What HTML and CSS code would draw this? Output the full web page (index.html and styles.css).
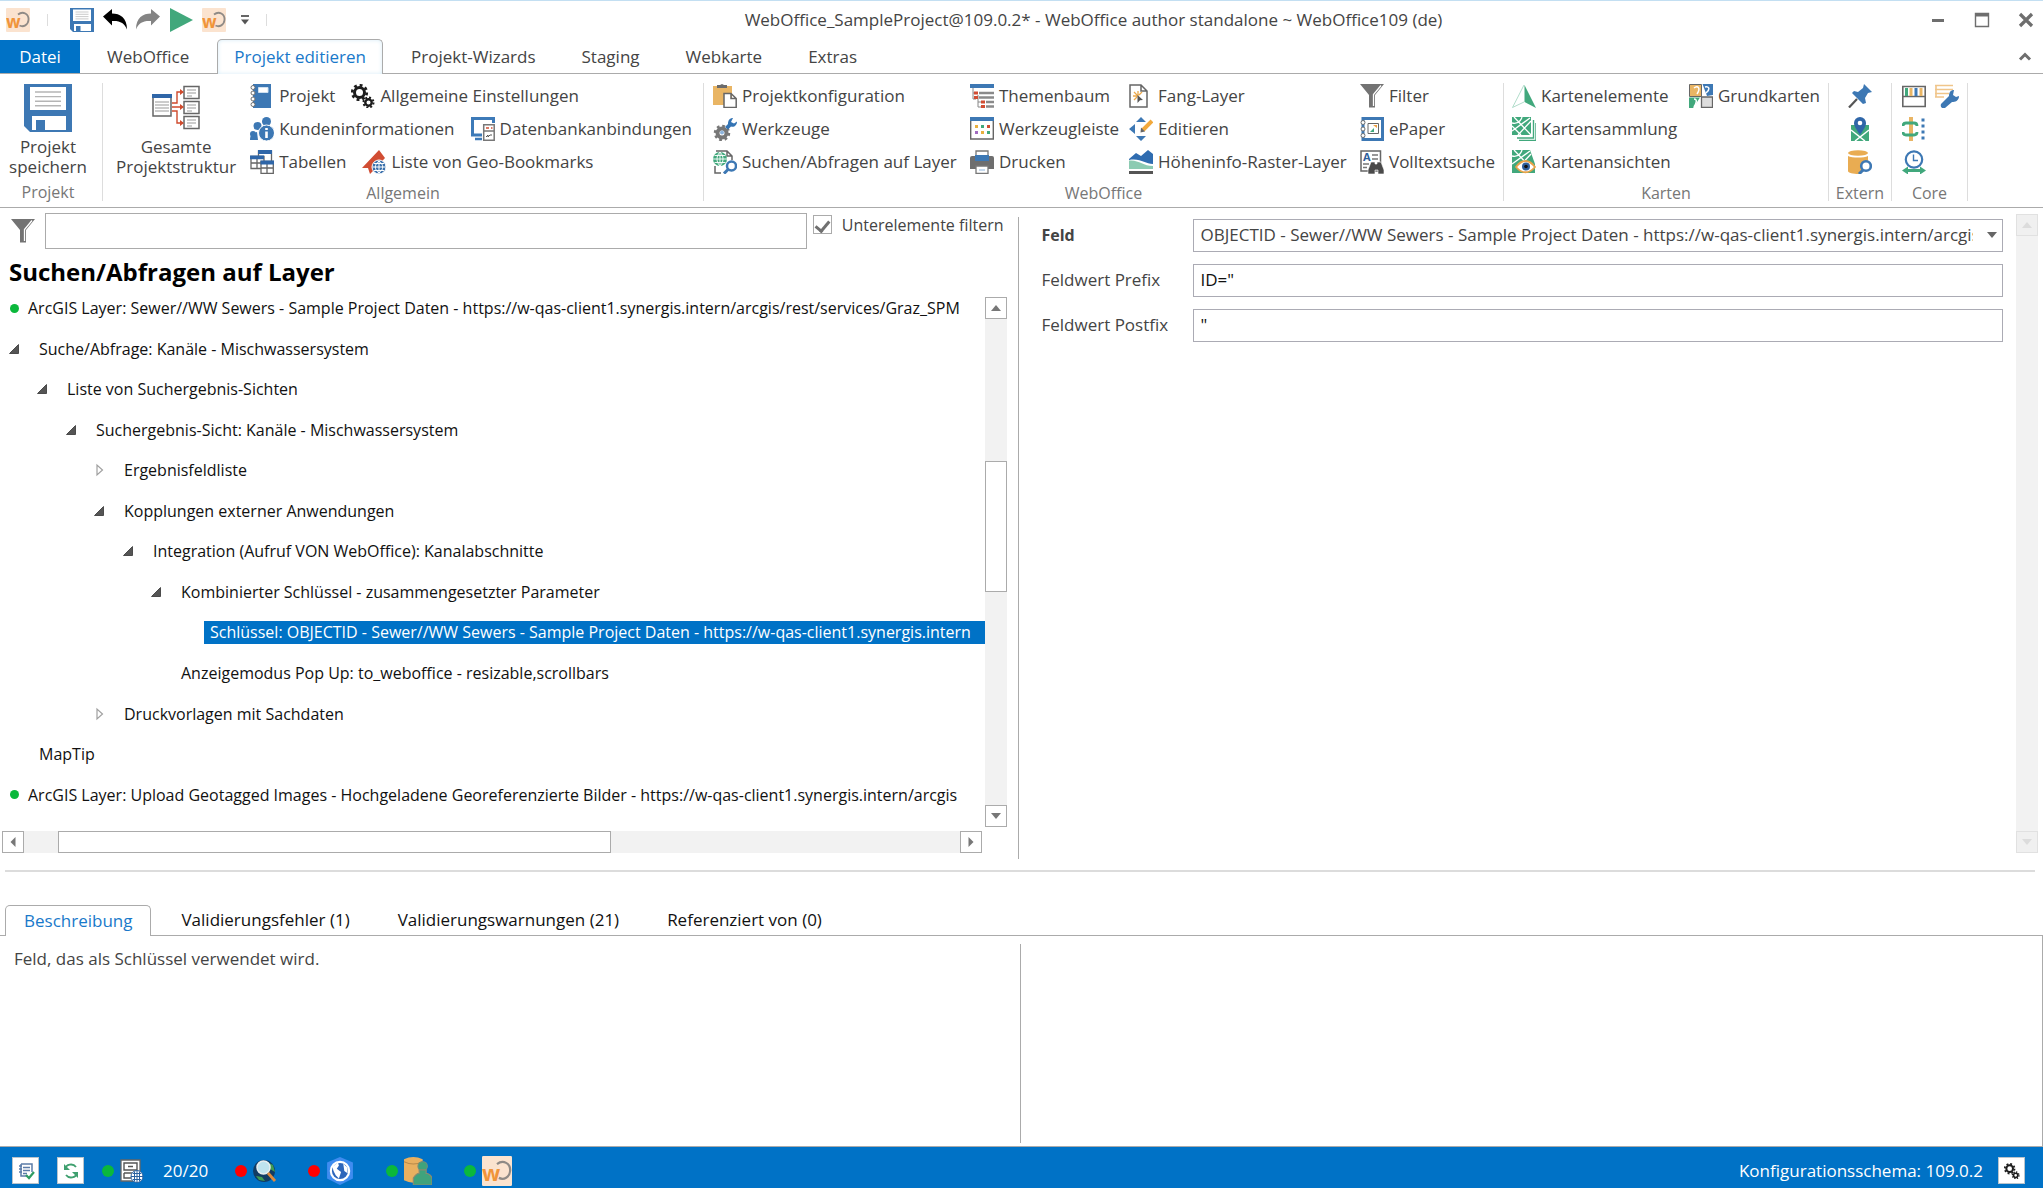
FILE: index.html
```html
<!DOCTYPE html>
<html lang="de">
<head>
<meta charset="utf-8">
<title>WebOffice_SampleProject@109.0.2* - WebOffice author standalone</title>
<meta name="viewport" content="width=device-width, initial-scale=1">
<link rel="stylesheet" href="styles.css">
</head>
<body>
<svg class="sprite" aria-hidden="true">
  <symbol id="wo" viewBox="0 0 24 24"><rect width="24" height="24" rx="1" fill="#fbe3cf"/><text x="0" y="20" font-family="Open Sans, sans-serif" font-weight="700" font-size="17" fill="#f0943a">w</text><path d="M12 6.500C17 2.500 23 6 22.500 12c-.5 5-5 7.500-9 5.500" fill="none" stroke="#8f8a86" stroke-width="1.800"/></symbol>
  <symbol id="floppy" viewBox="0 0 24 24"><path fill="#3d78b4" d="M0 0h24v24H3l-3-3z"/><path fill="#fff" d="M3 1.500h18v11.500H3zM4 16h17v7H4z"/><path fill="#3d78b4" d="M6 18h4.500v5H6z"/><path d="M5.500 4h13M5.500 6.300h13M5.500 8.600h13M5.500 10.900h13" stroke="#b5b5b5" stroke-width=".7"/></symbol>
  <symbol id="undo" viewBox="0 0 24 24"><path fill="#000" d="M0 8.500L9 1v4.500c8 0 15 4 15 16-2.500-6.500-7-9-15-8.500v4.500z"/></symbol>
  <symbol id="redo" viewBox="0 0 24 24"><path fill="#848484" d="M24 8.500L15 1v4.500C7 5.500 0 9.500 0 21.500 2.500 15 7 12.500 15 13v4.500z"/></symbol>
  <symbol id="play" viewBox="0 0 24 24"><path fill="#41a87c" d="M1 0l23 12L1 24z"/></symbol>
  <symbol id="book" viewBox="0 0 24 24"><path fill="#3d78b4" d="M3 0h18v24H3z"/><path fill="#fff" stroke="#cfe0f0" d="M8.500 3.500h9.500v5H8.500z"/><g fill="#fff" stroke="#707070"><circle cx="3" cy="3.500" r="2"/><circle cx="3" cy="9" r="2"/><circle cx="3" cy="15" r="2"/><circle cx="3" cy="20.500" r="2"/></g></symbol>
  <symbol id="gears" viewBox="0 0 24 24"><g fill="none" stroke="#1d1d1d"><circle cx="8.500" cy="8.500" r="5" stroke-width="3"/><circle cx="8.500" cy="8.500" r="7.300" stroke-width="2.600" stroke-dasharray="2.860 2.860"/><circle cx="17.500" cy="18.500" r="3.200" stroke-width="2.400"/><circle cx="17.500" cy="18.500" r="5" stroke-width="2" stroke-dasharray="1.960 1.960"/></g></symbol>
  <symbol id="people" viewBox="0 0 24 24"><g fill="#3d78b4"><circle cx="16.500" cy="4.500" r="4.500"/><circle cx="7.500" cy="9" r="4"/><circle cx="3" cy="17" r="3"/><path d="M0 23c0-5 2-7 7-8l1 8z"/></g><circle cx="16.500" cy="16" r="8" fill="#3d78b4" stroke="#fff"/><path d="M16.500 11v2M16.500 14.500V21" stroke="#fff" stroke-width="2.600"/></symbol>
  <symbol id="tables" viewBox="0 0 24 24"><g fill="#fff" stroke="#666" stroke-width="1.300"><path d="M8.500 1h13v12h-13z"/><path d="M1 6.500h13v12H1zM1 13h13M7 9v9"/><path d="M11 11.500h12.300v12H11zM11 18h12M17 14v9"/></g><path fill="#2f66a8" d="M8 0h14v4H8zM0 5.500h14v3.800H0zM10.500 10.500H24v4H10.500z"/></symbol>
  <symbol id="bookmark" viewBox="0 0 24 24"><path fill="#d14d33" d="M0 18L17 0l6 8-13 14-2 2-2-6z"/><circle cx="17" cy="17" r="7" fill="#3a70ac" stroke="#fff"/><path d="M10.500 17h13M17 10.500v13M17 11c-5 4-5 8 0 12 5-4 5-8 0-12M12 13.500h10M12 20.500h10" fill="none" stroke="#fff"/></symbol>
  <symbol id="db" viewBox="0 0 24 24"><path d="M11 18H1.500V1.500h21V6" fill="none" stroke="#3d7ab8" stroke-width="3"/><path d="M4 22h7" stroke="#3d7ab8" stroke-width="2.500"/><path fill="#fff" stroke="#777" stroke-width="1.500" d="M12.700 7.700h10.500v15.500H12.700zM13 14h10"/><path stroke="#d14d33" stroke-width="1.400" d="M15 11h3M20 11h1.500"/><path stroke="#555" fill="none" d="M15 20l2-2v2l2-2 2 0"/></symbol>
  <symbol id="clip" viewBox="0 0 24 24"><path fill="#e9b564" d="M0 2h19v19H0z"/><path fill="#6b6b6b" d="M4 1h3l2-1 2 1h3v3H4z"/><path fill="#fff" stroke="#666" stroke-width="1.500" d="M11 9.500h7l5.200 5v9H11zM18 9.500v5h5"/></symbol>
  <symbol id="tool" viewBox="0 0 24 24"><circle cx="9" cy="16" r="4.500" fill="none" stroke="#777" stroke-width="4"/><circle cx="9" cy="16" r="7" fill="none" stroke="#777" stroke-width="2.500" stroke-dasharray="2.750 2.750"/><circle cx="9" cy="15.500" r="2" fill="#8db4dc"/><path fill="#3474b4" d="M12 10l3-3c0-4 2-6 5-6l-2 4 3 1.500 3-2c0 4-3 6-6 5l-3 3z"/></symbol>
  <symbol id="searchlayer" viewBox="0 0 24 24"><path d="M3 1h11l5 5v4M2 16v7h6M14 1v5h5" fill="none" stroke="#666" stroke-width="1.500"/><circle cx="7" cy="9" r="7" fill="#41a87c"/><path d="M0 9h14M7 2v14M1.500 5.500h11M1.500 12.500h11M7 2c-4 4-4 10 0 14 4-4 4-10 0-14" fill="none" stroke="#fff" stroke-width=".9"/><circle cx="18.500" cy="16" r="4.500" fill="#fff" stroke="#3d78b4" stroke-width="2.500"/><path d="M15 19.500l-4 4" stroke="#3d78b4" stroke-width="3"/></symbol>
  <symbol id="theme" viewBox="0 0 24 24"><path fill="#3d78b4" d="M0 0h24v4H0z"/><path d="M3 4v11h3M3 9h3M8 11v12h4M8 18h4" fill="none" stroke="#888"/><path d="M9 9h15M9 13.500h15M16 18h8M16 22.500h8" stroke="#8a8a8a" stroke-width="2.500"/><path d="M4 9h4M4 13.500h4M11 18h4M11 22.500h4" stroke="#d14d33" stroke-width="2.800"/></symbol>
  <symbol id="toolbar" viewBox="0 0 24 24"><path fill="#fff" stroke="#666" stroke-width="1.400" d="M.7 1h22.600v21H.7z"/><path fill="#3d78b4" d="M0 0h24v4H0z"/><path stroke="#e9b040" stroke-width="3" d="M5 9.500h3M11 15.500h3"/><path stroke="#41a87c" stroke-width="3" d="M11 9.500h3M17 15.500h3"/><path stroke="#d14d33" stroke-width="3" d="M17 9.500h3"/><path stroke="#a06ac0" stroke-width="3" d="M5 15.500h3"/></symbol>
  <symbol id="print" viewBox="0 0 24 24"><path fill="#6e6e6e" d="M0 8q0-2 2-2h20q2 0 2 2v11H0z"/><path fill="#fff" stroke="#777" stroke-width="1.300" d="M6 1h12v9H6zM6 16h12v7.300H6z"/><path fill="#3d78b4" d="M5 5h14v6H5z"/><path d="M9 20h6" stroke="#8db4dc"/></symbol>
  <symbol id="snap" viewBox="0 0 24 24"><path fill="#fff" stroke="#666" stroke-width="1.500" d="M1 1h11l6 6v16H1zM12 1v6h6"/><path stroke="#eba94c" stroke-width="1.300" d="M9 7v5M4 12h5M5 8l3 3M13 8l-3 3M5 16l3-3"/><path fill="#555" d="M8.500 11l5.500 5-3 .3L8.500 19z"/></symbol>
  <symbol id="edit" viewBox="0 0 24 24"><path fill="#3d78b4" d="M12 0l5 5H7zM12 24l5-5H7zM0 12l6-5v10z"/><path d="M14 13L23 4" stroke="#f2a93c" stroke-width="4"/><path fill="#666" d="M12 10.500l4 4-4.500 1z"/></symbol>
  <symbol id="height" viewBox="0 0 24 24"><path fill="#2f6cb0" d="M0 9l7-6 5 3 7-6 5 4v10c-8 0-12-6-24-4z"/><path fill="#8ccbb2" d="M0 10.500C10 9.500 14 16 24 16v3H0z"/><path fill="#555" d="M0 21h24v3H0z"/></symbol>
  <symbol id="funnel" viewBox="0 0 24 24"><path fill="#737373" d="M0 0h24L15 11v12.500H9V11z"/><path fill="none" stroke="#fff" stroke-width="1.300" d="M21 1.500l-7.500 9V22"/></symbol>
  <symbol id="epaper" viewBox="0 0 24 24"><path fill="#fff" stroke="#3d78b4" stroke-width="3" d="M3 1.500h19.500v21H3z"/><path fill="#fff" stroke="#666" d="M8 6.500h10.500v10H8z"/><path fill="#f0a040" d="M13 8h4v3z"/><path fill="#41a87c" d="M10 15l4-4v4z"/><g fill="#fff" stroke="#707070"><circle cx="3" cy="5.500" r="2"/><circle cx="3" cy="12" r="2"/><circle cx="3" cy="18.500" r="2"/></g></symbol>
  <symbol id="fulltext" viewBox="0 0 24 24"><path fill="#fff" stroke="#666" stroke-width="1.500" d="M1 1h19.500v20H1z"/><text x="3" y="11" font-family="Open Sans, sans-serif" font-weight="700" font-size="11" fill="#2f5f9c">A</text><path d="M12 5h6M12 9h6M3 14h6M3 17.500h4" stroke="#777" stroke-width="1.300"/><path fill="#4a4a4a" stroke="#fff" stroke-width=".6" d="M11 12h4v2h2v-2h4l3 8v4h-6v-4h-3v4H8v-4z"/></symbol>
  <symbol id="north" viewBox="0 0 24 24"><path d="M12 1L.5 23.500 12 18" fill="none" stroke="#a8d8c4" stroke-width=".9"/><path fill="#41a87c" d="M12.500 1L24 24l-11.500-6z"/></symbol>
  <symbol id="mapset" viewBox="0 0 24 24"><path d="M7 23.500h17V6M5 21h16.500V3" fill="none" stroke="#41a87c" stroke-width="1.400"/><path fill="#41a87c" d="M0 0h19v18H0z"/><path d="M0 6C8 8 10 0 10 0M0 14L18 1M2 0l17 18M6 18l13-14M0 9l9 9" stroke="#fff" stroke-width="1.300" fill="none"/></symbol>
  <symbol id="mapview" viewBox="0 0 24 24"><path fill="#41a87c" d="M0 0h18l5 14v9H0z"/><path d="M0 6C8 8 10 0 10 0M0 14L18 1M2 0l17 18M6 18l13-14" stroke="#fff" stroke-width="1.300" fill="none"/><path fill="#fff" stroke="#e8a34a" stroke-width="1.800" d="M4 17c6-8 13-8 19 0-6 7-13 7-19 0z"/><circle cx="14" cy="16.500" r="4" fill="#2f5f9c"/><circle cx="14" cy="16.500" r="1.800" fill="#111"/></symbol>
  <symbol id="basemap" viewBox="0 0 24 24"><path fill="#e9b564" stroke="#666" d="M.5.500h12v12H.5z"/><path fill="#3d78b4" d="M13.500 0H24v11L18 12z"/><path fill="#41a87c" d="M0 13.500h11L4 24H0z"/><path fill="#ddd" stroke="#666" stroke-width="1.300" d="M12.500 13h11v10.500h-11z"/><path d="M5 4c4-3 7 0 3 6M16 3c5-1 5 3 1 6M5 15c4 0 2 5 0 8" fill="none" stroke="#fff" stroke-width="1.500"/></symbol>
  <symbol id="pin" viewBox="0 0 24 24"><path d="M9 15L1 23.500" stroke="#555" stroke-width="2.200"/><path fill="#3d78b4" d="M16 0l8 8-4 1-3 5 1 5-3 1L4 9l2-2 4 1 5-4z"/></symbol>
  <symbol id="mappin" viewBox="0 0 24 24"><path fill="#41a87c" d="M3 8h4l5 9 5-9h4v16H3z"/><path d="M3 13l14 11M21 13L7 24" stroke="#fff" stroke-width="1.500" fill="none"/><path fill="#2f66a8" d="M12 18C8 12 6 9 6 6a6 6 0 0112 0c0 3-2 6-6 12z"/><circle cx="12" cy="6" r="2.300" fill="#fff"/></symbol>
  <symbol id="dbsearch" viewBox="0 0 24 24"><path fill="#e9ac52" d="M0 6c4 2 16 2 20 0v13l-9 5C5 24 0 23 0 21z"/><ellipse cx="10" cy="3" rx="10" ry="2.800" fill="#e9ac52"/><circle cx="18" cy="16" r="4.800" fill="#fff" stroke="#3d78b4" stroke-width="2.600"/><path d="M15 20l-4 4" stroke="#3d78b4" stroke-width="3"/></symbol>
  <symbol id="palette" viewBox="0 0 24 24"><path fill="#fff" stroke="#666" stroke-width="1.600" d="M.8 2.500h22.400v20H.8z"/><path d="M1 12.500h22" stroke="#666" stroke-width="1.500"/><path d="M4.500 4v8" stroke="#41a87c" stroke-width="3"/><path d="M9 4v8M19 4v8" stroke="#e9b564" stroke-width="3"/><path d="M14 4v8" stroke="#3d78b4" stroke-width="3"/></symbol>
  <symbol id="cfg" viewBox="0 0 24 24"><path d="M0 1.500h18M0 5.500h18M0 9.500h14M0 13h9M1 1v12" stroke="#f0c58a" stroke-width="1.600"/><path fill="#3d78b4" d="M6 20l8-8c0-4 2-6 5-6l-1 5 3 2 3-1c0 5-4 6-7 6l-7 6c-3 1-5-1-4-4z"/></symbol>
  <symbol id="align" viewBox="0 0 24 24"><path fill="#e9b564" d="M7 0h4v24H7z"/><path d="M1 9q0-3 3-3h8q3 0 3 3M1 15q0 3 3 3h8q3 0 3-3" fill="none" stroke="#41a87c" stroke-width="2.800"/><path d="M21 1.500v22" stroke="#3d78b4" stroke-width="3" stroke-dasharray="3 3"/></symbol>
  <symbol id="clock" viewBox="0 0 24 24"><circle cx="12" cy="9.500" r="8.200" fill="#fff" stroke="#3d78b4" stroke-width="2.200"/><path d="M11.500 4.500v6H16" fill="none" stroke="#3d78b4" stroke-width="1.400"/><path fill="#41a87c" d="M0 20.500l6-4v2.500h12v-2.500l6 4-6 4v-2.500H6v2.500z"/></symbol>
  <symbol id="structure" viewBox="0 0 48 48"><g fill="#fff" stroke="#666" stroke-width="1.500"><path d="M1 12h18v20H1zM32 2.500h15v12H32zM32 17.500h15v12H32zM32 32.500h15v12H32z"/></g><path fill="#2f66a8" d="M0 10h20v4H0z"/><path d="M3 18h14M3 21h14M3 24h14M3 27h14M35 6h9M35 9h9M35 12h5M35 21h9M35 24h9M35 27h5M35 36h9M35 39h9M35 42h5" stroke="#999"/><path d="M20 19h5V8h4M20 23h9M20 27h5v12h4" fill="none" stroke="#cf4a2d" stroke-width="1.400"/><path fill="#cf4a2d" d="M28 5l4 3-4 3zM28 20l4 3-4 3zM28 36l4 3-4 3z"/></symbol>
  <symbol id="min" viewBox="0 0 16 16"><path fill="#6e6e6e" d="M2 7h12v3H2z"/></symbol>
  <symbol id="max" viewBox="0 0 16 16"><path d="M1.500 1.500h13v13h-13z" fill="none" stroke="#6e6e6e" stroke-width="1.400"/><path fill="#6e6e6e" d="M1 1h14v3.500H1z"/></symbol>
  <symbol id="close" viewBox="0 0 16 16"><path d="M2 2l12 12M14 2L2 14" stroke="#6e6e6e" stroke-width="3.200"/></symbol>
  <symbol id="fold" viewBox="0 0 16 16"><path d="M3 11.500L8 6.500l5 5" fill="none" stroke="#6e6e6e" stroke-width="3"/></symbol>
  <symbol id="up" viewBox="0 0 10 10"><path fill="currentColor" d="M0 8l5-6 5 6z"/></symbol>
  <symbol id="down" viewBox="0 0 10 10"><path fill="currentColor" d="M0 2l5 6 5-6z"/></symbol>
  <symbol id="left" viewBox="0 0 10 10"><path fill="currentColor" d="M7.500 0v10L2.500 5z"/></symbol>
  <symbol id="right" viewBox="0 0 10 10"><path fill="currentColor" d="M2.500 0v10l5-5z"/></symbol>
  <symbol id="open" viewBox="0 0 10 10"><path fill="#555" stroke="#222" stroke-width=".7" d="M9.500.500v9H.5z"/></symbol>
  <symbol id="shut" viewBox="0 0 10 14"><path fill="#fff" stroke="#a0a0a0" stroke-width="1.200" d="M3 2v10l5.500-5z"/></symbol>
  <symbol id="check" viewBox="0 0 24 24"><path fill="none" stroke="#5b7ca8" stroke-width="1.500" d="M7 5h11v8M7 5v12h6M9 8.500h7M9 11.500h7M9 14.500h4M5 7h3M5 10h3M5 13h3"/><path d="M12 16l3 3 5-6" fill="none" stroke="#2f9c62" stroke-width="2.200"/></symbol>
  <symbol id="sync" viewBox="0 0 24 24"><path d="M6 10c1-5 8-6 11-2M18 14c-1 5-8 6-11 2" fill="none" stroke="#3fa06f" stroke-width="1.800"/><path fill="#3fa06f" d="M5 5v6h6zM19 19v-6h-6z"/></symbol>
  <symbol id="server" viewBox="0 0 24 24"><path fill="#fff" stroke="#666" stroke-width="1.300" d="M1 1h19v21H1z"/><path fill="none" stroke="#555" stroke-width="1.400" d="M4 4h13v7H4zM4 14v5h7M4 14h9M8 7.500h5"/><circle cx="17" cy="17.500" r="6" fill="#fff" stroke="#2b62a0"/><path d="M11 17.500h12M17 12v11M13 14.500h8M13 20.500h8M14.500 12.500v10M19.500 12.500v10" stroke="#2b62a0"/></symbol>
  <symbol id="globe" viewBox="0 0 24 24"><circle cx="11" cy="12" r="11" fill="#123c63"/><path fill="#3f9b52" d="M14 3l6 3 2 7-5-3zM3 17l6 1 3 4-6-1z"/><circle cx="10.500" cy="8.500" r="6.500" fill="#bfe3ee" stroke="#e8eef0" stroke-width="1.500"/><path d="M15 14l7 8" stroke="#e08a3c" stroke-width="2.800"/></symbol>
  <symbol id="hex" viewBox="0 0 24 26"><path fill="#3f8cf0" d="M12 0l12 5v15l-12 6-12-6V5z"/><circle cx="12" cy="13" r="8.500" fill="#2d66bb" stroke="#fff" stroke-width="2"/><path fill="#fff" d="M5 9l5-4 1 3-2 3 4 3-2 6-3-3-2-4zM15 6l4 4v5l-3-2z"/></symbol>
  <symbol id="dbuser" viewBox="0 0 24 24"><path fill="#e9b060" d="M0 2q8-4 16 0v18q-8 4-16 0z"/><path d="M0 4q8 4 16 0" fill="none" stroke="#b98a4a"/><circle cx="16" cy="8" r="4" fill="#3fa37c" stroke="#6c8f7e"/><path fill="#3fa37c" stroke="#8a8a70" d="M8 24v-6c2-3 4-4 5-4v-3h6v3c2 0 5 2 5 5v5z"/></symbol>
</svg>

<header class="titlebar">
  <div class="quick">
    <svg class="i24"><use href="#wo"/></svg>
    <span class="tick"></span>
    <button type="button" aria-label="Speichern"><svg class="i24"><use href="#floppy"/></svg></button>
    <button type="button" aria-label="Rückgängig"><svg class="i24"><use href="#undo"/></svg></button>
    <button type="button" aria-label="Wiederholen"><svg class="i24"><use href="#redo"/></svg></button>
    <button type="button" aria-label="Starten"><svg class="i24"><use href="#play"/></svg></button>
    <button type="button" aria-label="WebOffice"><svg class="i24"><use href="#wo"/></svg></button>
    <button type="button" class="more" aria-label="Anpassen"><svg class="i8"><use href="#down"/></svg></button>
    <span class="tick"></span>
  </div>
  <h1 class="title">WebOffice_SampleProject@109.0.2* - WebOffice author standalone ~ WebOffice109 (de)</h1>
  <div class="winbtns">
    <button type="button" aria-label="Minimieren"><svg class="i16"><use href="#min"/></svg></button>
    <button type="button" aria-label="Maximieren"><svg class="i16"><use href="#max"/></svg></button>
    <button type="button" aria-label="Schließen"><svg class="i16"><use href="#close"/></svg></button>
  </div>
</header>

<nav class="tabs">
  <button type="button" class="tab tab-file">Datei</button>
  <button type="button" class="tab">WebOffice</button>
  <button type="button" class="tab tab-active">Projekt editieren</button>
  <button type="button" class="tab">Projekt-Wizards</button>
  <button type="button" class="tab">Staging</button>
  <button type="button" class="tab">Webkarte</button>
  <button type="button" class="tab">Extras</button>
  <button type="button" class="fold" aria-label="Menüband minimieren"><svg class="i16"><use href="#fold"/></svg></button>
</nav>

<section class="ribbon">
  <div class="group g-projekt">
    <div class="cmds"><button type="button" class="big"><svg class="i48"><use href="#floppy"/></svg><span>Projekt<br>speichern</span></button></div>
    <h2>Projekt</h2>
  </div>
  <div class="group g-allgemein">
    <div class="cmds">
      <button type="button" class="big"><svg class="i48"><use href="#structure"/></svg><span>Gesamte<br>Projektstruktur</span></button>
      <div class="lines">
        <div class="line"><button type="button" class="cmd"><svg class="i24"><use href="#book"/></svg>Projekt</button><button type="button" class="cmd"><svg class="i24"><use href="#gears"/></svg>Allgemeine Einstellungen</button></div>
        <div class="line"><button type="button" class="cmd"><svg class="i24"><use href="#people"/></svg>Kundeninformationen</button><button type="button" class="cmd"><svg class="i24"><use href="#db"/></svg>Datenbankanbindungen</button></div>
        <div class="line"><button type="button" class="cmd"><svg class="i24"><use href="#tables"/></svg>Tabellen</button><button type="button" class="cmd"><svg class="i24"><use href="#bookmark"/></svg>Liste von Geo-Bookmarks</button></div>
      </div>
    </div>
    <h2>Allgemein</h2>
  </div>
  <div class="group g-weboffice">
    <div class="cmds matrix">
      <button type="button" class="cmd"><svg class="i24"><use href="#clip"/></svg>Projektkonfiguration</button>
      <button type="button" class="cmd"><svg class="i24"><use href="#theme"/></svg>Themenbaum</button>
      <button type="button" class="cmd"><svg class="i24"><use href="#snap"/></svg>Fang-Layer</button>
      <button type="button" class="cmd"><svg class="i24"><use href="#funnel"/></svg>Filter</button>
      <button type="button" class="cmd"><svg class="i24"><use href="#tool"/></svg>Werkzeuge</button>
      <button type="button" class="cmd"><svg class="i24"><use href="#toolbar"/></svg>Werkzeugleiste</button>
      <button type="button" class="cmd"><svg class="i24"><use href="#edit"/></svg>Editieren</button>
      <button type="button" class="cmd"><svg class="i24"><use href="#epaper"/></svg>ePaper</button>
      <button type="button" class="cmd"><svg class="i24"><use href="#searchlayer"/></svg>Suchen/Abfragen auf Layer</button>
      <button type="button" class="cmd"><svg class="i24"><use href="#print"/></svg>Drucken</button>
      <button type="button" class="cmd"><svg class="i24"><use href="#height"/></svg>Höheninfo-Raster-Layer</button>
      <button type="button" class="cmd"><svg class="i24"><use href="#fulltext"/></svg>Volltextsuche</button>
    </div>
    <h2>WebOffice</h2>
  </div>
  <div class="group g-karten">
    <div class="cmds matrix">
      <button type="button" class="cmd"><svg class="i24"><use href="#north"/></svg>Kartenelemente</button>
      <button type="button" class="cmd"><svg class="i24"><use href="#basemap"/></svg>Grundkarten</button>
      <button type="button" class="cmd first"><svg class="i24"><use href="#mapset"/></svg>Kartensammlung</button>
      <button type="button" class="cmd first"><svg class="i24"><use href="#mapview"/></svg>Kartenansichten</button>
    </div>
    <h2>Karten</h2>
  </div>
  <div class="group g-extern">
    <div class="cmds matrix">
      <button type="button" class="cmd" aria-label="Externe Anwendung"><svg class="i24"><use href="#pin"/></svg></button>
      <button type="button" class="cmd" aria-label="Externe Karte"><svg class="i24"><use href="#mappin"/></svg></button>
      <button type="button" class="cmd" aria-label="Externe Suche"><svg class="i24"><use href="#dbsearch"/></svg></button>
    </div>
    <h2>Extern</h2>
  </div>
  <div class="group g-core">
    <div class="cmds matrix">
      <button type="button" class="cmd" aria-label="Legende"><svg class="i24"><use href="#palette"/></svg></button>
      <button type="button" class="cmd" aria-label="Einstellungen"><svg class="i24"><use href="#cfg"/></svg></button>
      <button type="button" class="cmd first" aria-label="Ausrichtung"><svg class="i24"><use href="#align"/></svg></button>
      <button type="button" class="cmd first" aria-label="Zeit"><svg class="i24"><use href="#clock"/></svg></button>
    </div>
    <h2>Core</h2>
  </div>
</section>

<main class="work">
  <section class="treepane">
    <div class="filter">
      <svg class="i24"><use href="#funnel"/></svg>
      <input type="text" class="filter-box" aria-label="Filter">
      <input type="checkbox" id="sub" class="tickbox" checked>
      <label for="sub">Unterelemente filtern</label>
    </div>
    <h2 class="heading">Suchen/Abfragen auf Layer</h2>
    <div class="treearea">
      <ul class="tree">
        <li class="root"><i class="dot green"></i><span>ArcGIS Layer: Sewer//WW Sewers - Sample Project Daten - https://w-qas-client1.synergis.intern/arcgis/rest/services/Graz_SPM</span></li>
        <li class="l0"><svg class="i10"><use href="#open"/></svg><span>Suche/Abfrage: Kanäle - Mischwassersystem</span></li>
        <li class="l1"><svg class="i10"><use href="#open"/></svg><span>Liste von Suchergebnis-Sichten</span></li>
        <li class="l2"><svg class="i10"><use href="#open"/></svg><span>Suchergebnis-Sicht: Kanäle - Mischwassersystem</span></li>
        <li class="l3"><svg class="i10 tall"><use href="#shut"/></svg><span>Ergebnisfeldliste</span></li>
        <li class="l3"><svg class="i10"><use href="#open"/></svg><span>Kopplungen externer Anwendungen</span></li>
        <li class="l4"><svg class="i10"><use href="#open"/></svg><span>Integration (Aufruf VON WebOffice): Kanalabschnitte</span></li>
        <li class="l5"><svg class="i10"><use href="#open"/></svg><span>Kombinierter Schlüssel - zusammengesetzter Parameter</span></li>
        <li class="l6"><span class="selected">Schlüssel: OBJECTID - Sewer//WW Sewers - Sample Project Daten - https://w-qas-client1.synergis.intern</span></li>
        <li class="l5"><svg class="i10"></svg><span>Anzeigemodus Pop Up: to_weboffice - resizable,scrollbars</span></li>
        <li class="l3"><svg class="i10 tall"><use href="#shut"/></svg><span>Druckvorlagen mit Sachdaten</span></li>
        <li class="l0"><svg class="i10"></svg><span>MapTip</span></li>
        <li class="root"><i class="dot green"></i><span>ArcGIS Layer: Upload Geotagged Images - Hochgeladene Georeferenzierte Bilder - https://w-qas-client1.synergis.intern/arcgis</span></li>
      </ul>
      <div class="vbar">
        <button type="button" aria-label="Nach oben"><svg class="i10"><use href="#up"/></svg></button>
        <div class="track"><div class="thumb"></div></div>
        <button type="button" aria-label="Nach unten"><svg class="i10"><use href="#down"/></svg></button>
      </div>
    </div>
    <div class="hbar">
      <button type="button" aria-label="Nach links"><svg class="i10"><use href="#left"/></svg></button>
      <div class="track"><div class="thumb"></div></div>
      <button type="button" aria-label="Nach rechts"><svg class="i10"><use href="#right"/></svg></button>
    </div>
  </section>
  <section class="formpane">
    <form class="form">
      <label for="feld" class="strong">Feld</label>
      <div class="selectwrap">
        <select id="feld"><option>OBJECTID - Sewer//WW Sewers - Sample Project Daten - https://w-qas-client1.synergis.intern/arcgis/rest/services</option></select>
        <svg class="i10"><use href="#down"/></svg>
      </div>
      <label for="prefix">Feldwert Prefix</label>
      <input type="text" id="prefix" value="ID=&quot;">
      <label for="postfix">Feldwert Postfix</label>
      <input type="text" id="postfix" value="&quot;">
    </form>
    <div class="vbar off">
      <button type="button" disabled aria-label="Nach oben"><svg class="i10"><use href="#up"/></svg></button>
      <div class="track"></div>
      <button type="button" disabled aria-label="Nach unten"><svg class="i10"><use href="#down"/></svg></button>
    </div>
  </section>
</main>

<nav class="subtabs">
  <button type="button" class="subtab subtab-active">Beschreibung</button>
  <button type="button" class="subtab">Validierungsfehler (1)</button>
  <button type="button" class="subtab">Validierungswarnungen (21)</button>
  <button type="button" class="subtab">Referenziert von (0)</button>
</nav>
<section class="details">
  <p>Feld, das als Schlüssel verwendet wird.</p>
  <div class="aside"></div>
</section>

<footer class="status">
  <button type="button" class="sq" aria-label="Validieren"><svg class="i24"><use href="#check"/></svg></button>
  <button type="button" class="sq" aria-label="Aktualisieren"><svg class="i24"><use href="#sync"/></svg></button>
  <span class="state s-server"><i class="dot green"></i><svg class="i24"><use href="#server"/></svg><span>20/20</span></span>
  <span class="state s-globe"><i class="dot red"></i><svg class="i24"><use href="#globe"/></svg></span>
  <span class="state s-wide"><i class="dot red"></i><svg class="i28"><use href="#hex"/></svg></span>
  <span class="state s-wide"><i class="dot green"></i><svg class="i28"><use href="#dbuser"/></svg></span>
  <span class="state"><i class="dot green"></i><svg class="i30"><use href="#wo"/></svg></span>
  <span class="schema">Konfigurationsschema: 109.0.2</span>
  <button type="button" class="sq" aria-label="Schema"><svg class="i16"><use href="#gears"/></svg></button>
</footer>
</body>
</html>
```
FILE: styles.css
```css
* { box-sizing: border-box; }

body {
  margin: 0;
  height: 100vh;
  min-height: 900px;
  display: flex;
  flex-direction: column;
  overflow: hidden;
  background: #fff;
  color: #444;
  border-top: 1px solid #c3dff2;
  font: 17px/20px "Open Sans", "Noto Sans", sans-serif;
}

button {
  font: inherit;
  color: inherit;
  background: none;
  border: 0;
  padding: 0;
  display: flex;
  align-items: center;
  white-space: nowrap;
}

input, select { font: inherit; border-radius: 0; }
h1, h2, p, ul { margin: 0; padding: 0; }
svg { flex: none; display: block; }

.sprite { display: none; }
.i8 { width: 8px; height: 8px; }
.i10 { width: 10px; height: 10px; }
.i10.tall { height: 14px; }
.i16 { width: 16px; height: 16px; }
.i24 { width: 24px; height: 24px; }
.i28 { width: 28px; height: 28px; }
.i30 { width: 30px; height: 30px; }
.i48 { width: 48px; height: 48px; }

/* Title bar */
.titlebar {
  display: grid;
  grid-template-columns: 1fr auto 1fr;
  align-items: center;
  height: 38px;
  flex: none;
}
.quick { display: flex; align-items: center; gap: 9px; padding-left: 6px; }
.tick { width: 1px; height: 12px; background: #ddd; margin: 0 13px 0 8px; }
.more { border-top: 2px solid #666; width: 8px; margin: 0 0 0 6px; padding-top: 1px; color: #555; }
.title { font-size: 17px; font-weight: 400; padding-left: 144px; white-space: nowrap; }
.winbtns { display: flex; justify-content: flex-end; gap: 28px; padding-right: 9px; }

/* Ribbon tabs */
.tabs {
  display: flex;
  align-items: stretch;
  height: 35px;
  flex: none;
  border-bottom: 1px solid #ababab;
}
.tab { height: 35px; padding: 0 23px; }
.tab-file { width: 80px; padding: 0; justify-content: center; background: #0072c6; color: #fff; margin: 1px 4px 0 0; height: 33px; }
.tab-active {
  padding: 0 16px;
  margin: 0 5px;
  background: #fff;
  border: 1px solid #ababab;
  border-bottom: 0;
  border-radius: 5px 5px 0 0;
  box-shadow: inset 0 0 4px #d6ecf8;
  color: #1979ca;
}
.fold { margin-left: auto; padding-right: 10px; }

/* Ribbon */
.ribbon {
  display: flex;
  height: 134px;
  flex: none;
  padding-top: 9px;
  border-bottom: 1px solid #ababab;
}
.group {
  display: flex;
  flex-direction: column;
  flex: none;
  height: 118px;
  border-right: 1px solid #ddd;
}
.group h2 { font-size: 16px; font-weight: 400; color: #777; text-align: center; height: 20px; line-height: 22px; }
.cmds { display: flex; height: 99px; align-items: stretch; }
.big { flex-direction: column; justify-content: flex-start; gap: 5px; padding-top: 1px; }
.lines { display: flex; flex-direction: column; }
.line { display: flex; gap: 16px; }
.cmd { height: 33px; gap: 5px; padding-bottom: 7px; }
.matrix { display: grid; grid-auto-rows: 33px; align-content: start; }
.first { grid-column: 1; }
.g-projekt { width: 103px; }
.g-projekt .cmds { justify-content: center; padding-right: 6px; }
.g-projekt h2 { padding-right: 6px; }
.g-allgemein { width: 601px; }
.g-allgemein .cmds { gap: 14px; padding-left: 13px; }
.g-weboffice { width: 800px; }
.g-weboffice .cmds { grid-template-columns: 257px 159px 231px auto; padding-left: 9px; }
.g-karten { width: 325px; }
.g-karten .cmds { grid-template-columns: 177px auto; padding-left: 8px; }
.g-extern { width: 63px; }
.g-extern .cmds { padding-left: 19px; }
.g-core { width: 76px; }
.g-core .cmds { grid-template-columns: 33px auto; padding-left: 10px; }

/* Work area */
.work {
  flex: 653 1 0;
  min-height: 0;
  display: grid;
  grid-template-columns: 1018fr 1024fr;
  margin-bottom: 9px;
}
.treepane { display: flex; flex-direction: column; min-height: 0; min-width: 0; padding: 5px 11px 8px 2px; }
.filter { display: flex; align-items: flex-start; gap: 6px; padding-left: 9px; }
.filter > svg { margin: 6px 4px 0 0; }
.filter label { font-size: 16px; padding: 2px 4px 0 0; }
.filter-box { flex: 1; min-width: 0; height: 36px; border: 1px solid #ababab; }
.tickbox {
  appearance: none;
  width: 19px;
  height: 19px;
  margin: 2px 4px 0 0;
  border: 1px solid #ababab;
  display: grid;
  place-items: center;
}
.tickbox:checked::before {
  content: "";
  width: 6px;
  height: 11px;
  border: solid #707070;
  border-width: 0 3px 3px 0;
  transform: rotate(40deg);
}
.heading { font-size: 24px; line-height: 32px; color: #000; margin: 7px 0 9px 7px; }
.treearea { flex: 1; min-height: 0; display: flex; }
.tree {
  flex: 1;
  min-width: 0;
  list-style: none;
  display: flex;
  flex-direction: column;
  overflow: hidden;
  color: #111;
  font-size: 16px;
  margin: -9px 0 12px;
}
.tree li { flex: 1; display: flex; align-items: center; gap: 20px; white-space: nowrap; }
.tree .root { padding-left: 8px; gap: 9px; }
.tree .l0 { padding-left: 7px; }
.tree .l1 { padding-left: 35px; }
.tree .l2 { padding-left: 64px; }
.tree .l3 { padding-left: 92px; }
.tree .l4 { padding-left: 121px; }
.tree .l5 { padding-left: 149px; }
.tree .l6 { padding-left: 202px; }
.selected { flex: 1; min-width: 0; overflow: hidden; background: #0072c6; color: #fff; padding: 0 0 0 6px; line-height: 23px; }
.dot { width: 9px; height: 9px; border-radius: 50%; flex: none; }
.green { background: #0bb83c; }
.red { background: #f00; }

/* Scroll bars */
.vbar { width: 22px; flex: none; display: flex; flex-direction: column; background: #f2f2f2; }
.hbar { height: 22px; flex: none; display: flex; background: #f2f2f2; margin: 4px 25px 0 0; }
.vbar button, .hbar button {
  width: 22px;
  height: 22px;
  flex: none;
  justify-content: center;
  background: #fff;
  border: 1px solid #ababab;
  color: #777;
}
.track { flex: 1; display: flex; }
.vbar .track { flex-direction: column; }
.vbar .thumb { height: 27%; margin-top: 142px; background: #fff; border: 1px solid #ababab; }
.hbar .thumb { width: 59%; margin-left: 34px; background: #fff; border: 1px solid #ababab; }
.vbar.off button { background: #f0f0f0; border-color: #e1e1e1; color: #dcdcdc; }

/* Form */
.formpane { display: flex; justify-content: space-between; gap: 13px; padding: 6px 5px 8px 0; min-width: 0; }
.formpane::before { content: ""; width: 1px; flex: none; background: #ababab; margin: 3px 9px -6px 0; }
.form {
  flex: 1;
  min-width: 0;
  display: grid;
  grid-template-columns: 152px minmax(0, 1fr);
  grid-auto-rows: 33px;
  row-gap: 12px;
  align-content: start;
  padding-top: 5px;
}
.form label { padding-top: 6px; }
.form .strong { font-weight: 700; font-size: 16px; }
.form input, .form select { width: 100%; height: 33px; border: 1px solid #ababb4; background: #fff; padding: 0 6px 2px; color: #111; }
.form select { appearance: none; color: #444; padding-right: 29px; }
.selectwrap { position: relative; color: #666; }
.selectwrap svg { position: absolute; right: 6px; top: 11px; }

/* Lower tabs */
.subtabs {
  display: flex;
  flex: none;
  height: 66px;
  align-items: flex-end;
  border-bottom: 1px solid #ababab;
  padding-left: 5px;
  background: linear-gradient(#dcdcdc, #dcdcdc) 5px 0 / calc(100% - 13px) 2px no-repeat;
}
.subtab { height: 30px; padding: 0 24px; color: #111; }
.subtab-active { color: #1979ca; background: #fff; border: 1px solid #ababab; border-bottom: 0; border-radius: 5px 5px 0 0; padding: 0 18px; margin-bottom: -1px; height: 31px; margin-right: 6px; }
.details {
  flex: 199 1 0;
  display: grid;
  grid-template-columns: 1020fr 1022fr;
  border-right: 1px solid #ababab;
  border-bottom: 1px solid #ababab;
  padding: 8px 0 3px;
}
.details p { padding: 5px 14px; }
.aside { border-left: 1px solid #ababab; }

/* Status bar */
.status {
  flex: none;
  height: 41px;
  display: flex;
  align-items: center;
  background: #0072c6;
  color: #fff;
  padding: 6px 18px 0 12px;
}
.status .dot { width: 12px; height: 12px; }
.sq { width: 27px; height: 27px; background: #fff; border: 1px solid #b9c4cc; justify-content: center; margin-right: 18px; }
.state { display: flex; align-items: center; gap: 6px; }
.s-server { width: 133px; }
.s-server span { padding-left: 13px; }
.s-globe { width: 73px; }
.s-wide { width: 78px; }
.schema { margin-left: auto; padding-right: 15px; }
.status .sq:last-child { margin-right: 0; }
```
